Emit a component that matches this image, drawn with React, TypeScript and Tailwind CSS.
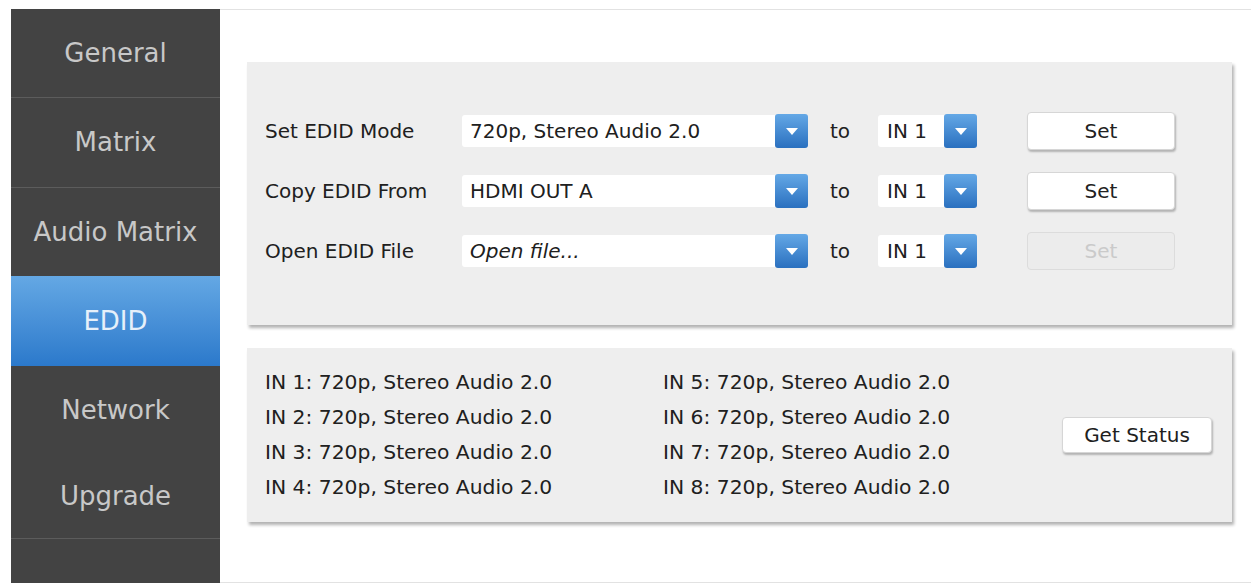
import React from 'react';

const navItems = [
    { label: 'General', h: 'h-[89px]', divider: true },
    { label: 'Matrix', h: 'h-[90px]', divider: true },
    { label: 'Audio Matrix', h: 'h-[88px]', divider: false },
    { label: 'EDID', h: 'h-[90px]', divider: false, active: true },
    { label: 'Network', h: 'h-[88px]', divider: false },
    { label: 'Upgrade', h: 'h-[85px]', divider: true },
];

const statusLeft = ['IN 1', 'IN 2', 'IN 3', 'IN 4'];
const statusRight = ['IN 5', 'IN 6', 'IN 7', 'IN 8'];

const ArrowBox = () => (
    <div className="w-[33px] h-[34px] rounded-[3px] bg-gradient-to-b from-[#64a8e6] to-[#2a70bf] flex items-center justify-center shrink-0">
        <svg width="14" height="9" viewBox="0 0 14 9">
            <polygon points="1,1 13,1 7,8" fill="#ffffff" />
        </svg>
    </div>
);

const Select: React.FC<{ value: string; width: string; italic?: boolean; pad: string }> = ({ value, width, italic, pad }) => (
    <div className={`${width} h-[34px] flex items-center`}>
        <div className={`flex-1 h-[32px] bg-white rounded-l-[3px] flex items-center ${pad} ${italic ? 'italic' : ''}`}>
            {value}
        </div>
        <ArrowBox />
    </div>
);

const SetButton: React.FC<{ disabled?: boolean }> = ({ disabled }) => (
    <button
        className={`ml-[50px] w-[148px] h-[38px] rounded-[4px] border flex items-center justify-center ${
            disabled
                ? 'bg-[#ececec] border-[#dcdcdc] text-[#cacaca]'
                : 'bg-white border-[#d6d6d6] text-[#222] shadow-[1px_2px_2px_rgba(0,0,0,0.25)]'
        }`}
    >
        Set
    </button>
);

const rows = [
    { label: 'Set EDID Mode', value: '720p, Stereo Audio 2.0' },
    { label: 'Copy EDID From', value: 'HDMI OUT A' },
    { label: 'Open EDID File', value: 'Open file...', italic: true, disabled: true },
];

export default function App() {
    return (
        <div
            className="w-[1251px] h-[587px] bg-white pt-[9px] pl-[11px] flex text-[20px] text-[#202020]"
            style={{ fontFamily: '"DejaVu Sans", Verdana, sans-serif' }}
        >
            {/* Sidebar */}
            <div className="w-[209px] h-[574px] bg-[#434343] flex flex-col shrink-0">
                {navItems.map((item) => (
                    <div
                        key={item.label}
                        className={`${item.h} flex items-center justify-center text-[26px] ${
                            item.active
                                ? 'bg-gradient-to-b from-[#64a8e4] to-[#2b79cb] text-[#e6f0fa]'
                                : 'text-[#c8c8c8]'
                        } ${item.divider ? 'border-b border-[#5c5c5c]' : ''}`}
                    >
                        {item.label}
                    </div>
                ))}
                <div className="flex-1" />
            </div>

            {/* Content */}
            <div className="flex-1 h-[574px] border-t border-b border-[#e2e2e2] pt-[52px] pl-[27px] pr-[19px]">
                <div className="h-[263px] bg-[#eeeeee] shadow-[2px_3px_3px_rgba(0,0,0,0.3)] pt-[52px] pl-[18px] flex flex-col gap-[26px]">
                    {rows.map((row) => (
                        <div key={row.label} className="flex items-center h-[34px]">
                            <div className="w-[197px]">{row.label}</div>
                            <Select value={row.value} width="w-[346px]" italic={row.italic} pad="pl-[8px]" />
                            <div className="ml-[22px] w-[20px]">to</div>
                            <div className="ml-[28px]">
                                <Select value="IN 1" width="w-[99px]" pad="pl-[9px]" />
                            </div>
                            <SetButton disabled={row.disabled} />
                        </div>
                    ))}
                </div>

                <div className="mt-[23px] h-[174px] bg-[#eeeeee] shadow-[2px_3px_3px_rgba(0,0,0,0.3)] pl-[18px] pr-[20px] flex items-center">
                    <div className="flex text-[20.3px]">
                        <div className="w-[398px] flex flex-col leading-[35px]">
                            {statusLeft.map((s) => (
                                <div key={s}>{s}: 720p, Stereo Audio 2.0</div>
                            ))}
                        </div>
                        <div className="flex flex-col leading-[35px]">
                            {statusRight.map((s) => (
                                <div key={s}>{s}: 720p, Stereo Audio 2.0</div>
                            ))}
                        </div>
                    </div>
                    <button className="ml-auto w-[150px] h-[36px] rounded-[4px] bg-white border border-[#d6d6d6] shadow-[1px_2px_2px_rgba(0,0,0,0.25)] flex items-center justify-center">
                        Get Status
                    </button>
                </div>
            </div>
        </div>
    );
}
